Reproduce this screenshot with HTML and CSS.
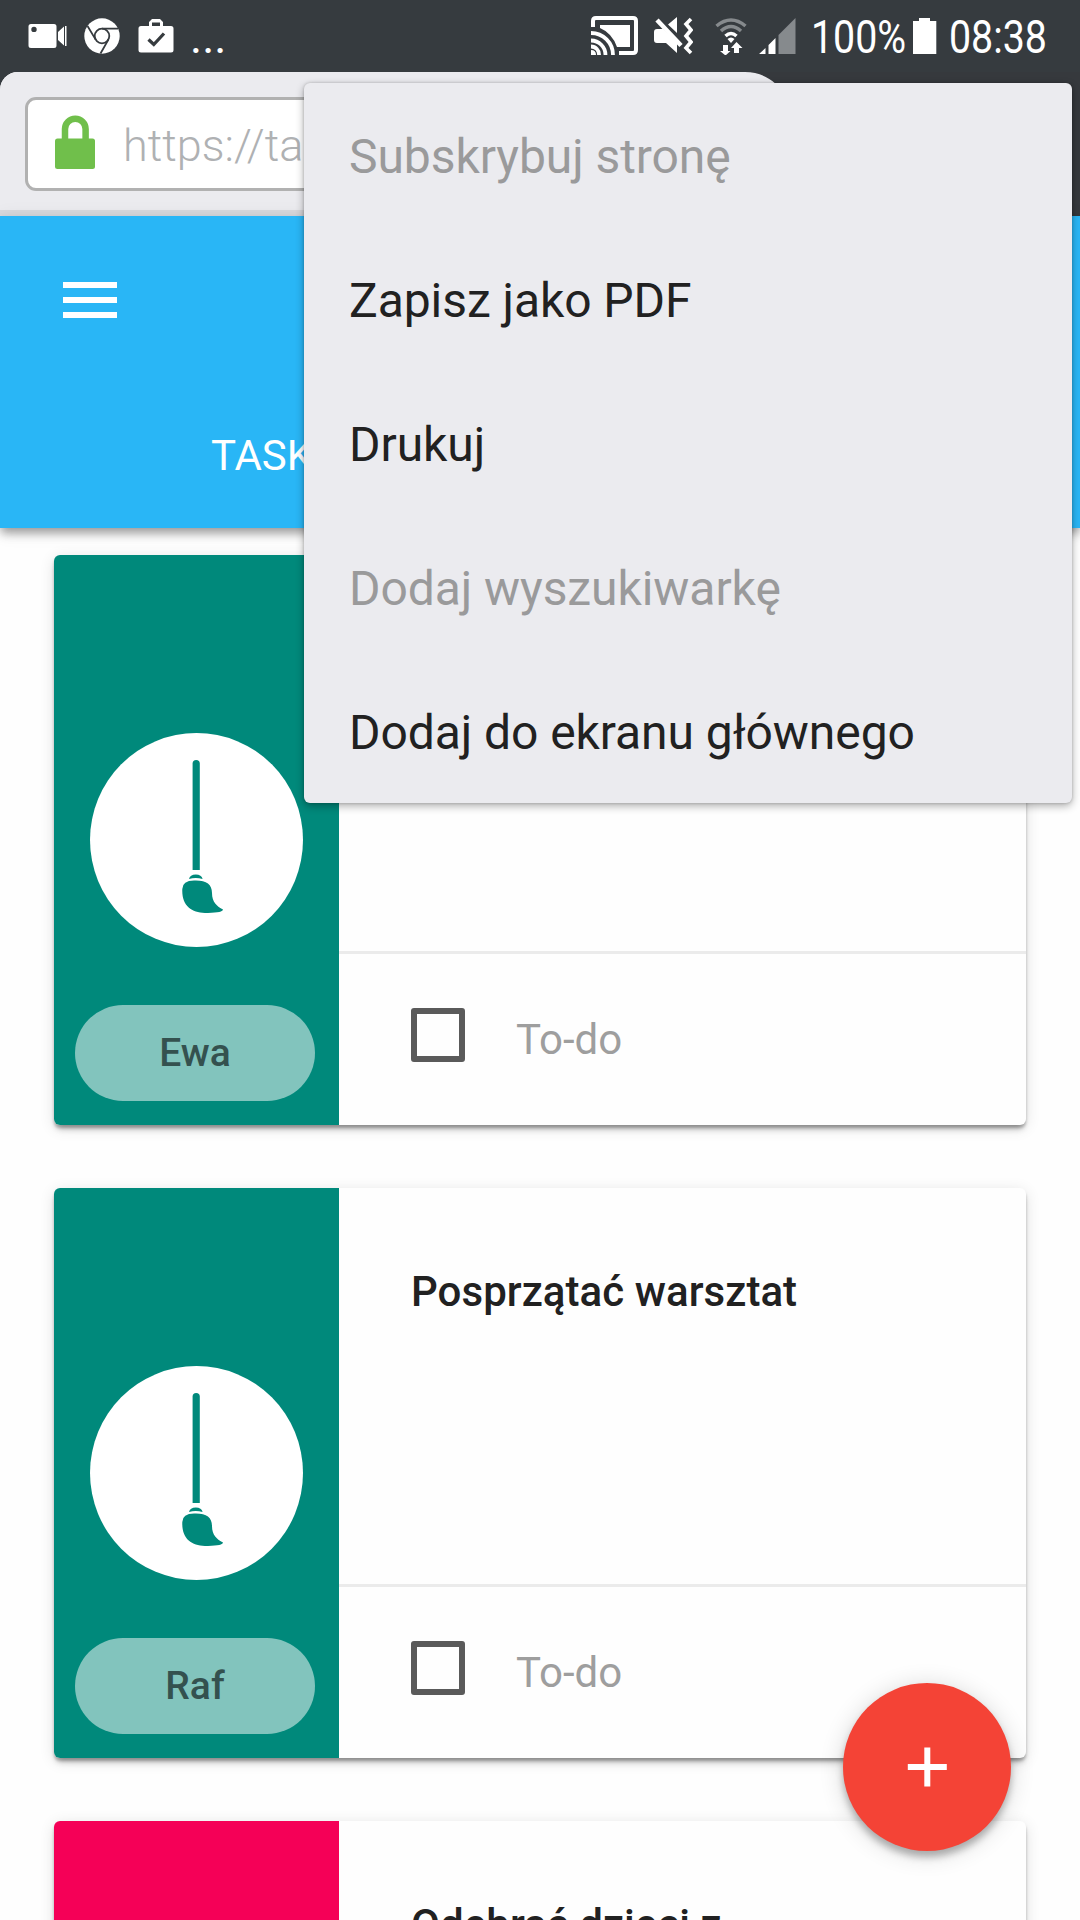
FILE: index.html
```html
<!DOCTYPE html>
<html lang="pl">
<head>
<meta charset="utf-8">
<title>Tasks</title>
<link rel="stylesheet" href="styles.css">
</head>
<body>
<div class="screen">
  <div class="status">
    <div class="status-group">
      <svg width="39" height="26" viewBox="0 0 39 26"><path fill="#fff" fill-rule="evenodd" d="M3 1H26a2.500 2.500 0 0 1 2.500 2.500V22.500a2.500 2.500 0 0 1-2.500 2.500H3A2.500 2.500 0 0 1 .5 22.500V3.500A2.500 2.500 0 0 1 3 1ZM6 3.700a2.700 2.700 0 1 0 0 5.400a2.700 2.700 0 0 0 0-5.400ZM30 9l6-5.500v19L30 17ZM37 3h1.500v20H37Z"/></svg>
      <svg class="chrome" width="36" height="36" viewBox="0 0 36 36"><circle cx="18" cy="18" r="17.700" fill="#fff"/><g fill="none" stroke="#363b3f" stroke-width="1.800"><circle cx="18" cy="18" r="7.300"/><path d="M18 10.700H34M11.700 21.600 3.500 8M24.400 21.600 16.500 35.500"/></g></svg>
      <svg class="shop" width="36" height="36" viewBox="0 0 36 36"><path fill="#fff" fill-rule="evenodd" d="M3 8H11V4l3-3H22l3 3V8h8a2.500 2.500 0 0 1 2.500 2.500V32A2.500 2.500 0 0 1 33 34.500H3A2.500 2.500 0 0 1 .5 32V10.500A2.500 2.500 0 0 1 3 8ZM14 4.500V8H22V4.500Z"/><path d="m10.500 21.500 5.300 5L26 15.500" fill="none" stroke="#363b3f" stroke-width="3.300"/></svg>
      <span class="more">...</span>
    </div>
    <div class="status-group">
      <svg width="47" height="40" viewBox="0 0 47 40"><g fill="none" stroke="#fff" stroke-width="4"><path d="M2 11V5q0-3 3-3H42q3 0 3 3V34q0 3-3 3H28"/><path d="M0 30.500a8 8 0 0 1 8 8.500M0 24.500a14.500 14.500 0 0 1 14.500 14.500M0 17a22 22 0 0 1 22 22" stroke-width="3.800"/></g><path fill="#fff" d="M9 9H39V31H26Q21 17 9 12ZM0 34q5 0 5 5H0Z"/></svg>
      <svg class="mute" width="39" height="38" viewBox="0 0 39 38"><path fill="#fff" d="M3 12H9L23 26V36L12 26H3Q0 26 0 23V15Q0 12 3 12ZM14 7.500 23 0V16Z"/><path d="m3 3 24 25.500" stroke="#fff" stroke-width="4.500"/><path d="m37 2-5 5 5 6-5 6 5 6-5 6 5 5" fill="none" stroke="#fff" stroke-width="3.600"/></svg>
      <svg class="wifi" width="32" height="37" viewBox="0 0 32 37"><g fill="none"><path d="M1.500 8Q16-4 30.500 8" stroke="#868a8d" stroke-width="3.500"/><path d="M6 13Q16 4 26 13" stroke="#868a8d" stroke-width="3.500"/><path d="M10.500 18Q16 13 21.500 18" stroke="#fff" stroke-width="3.500"/></g><path fill="#fff" d="m12.500 21q3.500-3 7 0L16 25ZM8 27h5v6h2.500L10.500 37.500 5 33h3ZM19 35h5V30h3.500L21.500 24 16 30h3Z"/></svg>
      <svg class="signal" width="37" height="37" viewBox="0 0 37 37"><path fill="#fff" d="M0 36 6.500 30V36ZM9.500 27 16.500 20V36H9.500Z"/><path fill="#868a8d" d="M19.500 17 36.500 0V36H19.500Z"/></svg>
      <span class="percent">100%</span>
      <svg class="battery" width="24" height="37" viewBox="0 0 24 37"><path fill="#fff" d="M6 0H17V3h6.300V36H0V3H6Z"/></svg>
      <span class="clock">08:38</span>
    </div>
  </div>

  <div class="browser">
    <svg class="curve" width="160" height="144" viewBox="0 0 160 144"><path fill="#36393d" d="M5 0H160V144H120C85 144 80 90 65 60C52 28 36 0 5 0Z"/></svg>
    <div class="url">
      <svg class="lock" width="40" height="54" viewBox="0 0 40 54"><path fill="none" stroke="#70bf4b" stroke-width="6.500" d="M10 26V14a10.300 10.300 0 0 1 20.600 0V26"/><rect y="23.500" width="40" height="30.500" rx="2.500" fill="#70bf4b"/></svg>
      <span>https://ta</span>
    </div>
  </div>

  <header class="appbar">
    <div class="burger"><i></i><i></i><i></i></div>
    <div class="tab">TASKS</div>
  </header>

  <main class="list">
    <article class="card">
      <div class="side">
        <div class="disc"><svg width="44" height="156" viewBox="0 0 44 156"><g fill="#00897b"><path d="M11.600 113V6.500a3.600 3.600 0 0 1 7.200 0V113Z"/><path d="M8 122q1-4.500 6.800-4.500T21.600 122q-7-2-13.600 0Z"/><path d="M1.300 132Q1.500 123.500 13 123.500C25 123 31 127 31 136C31 145 36 149.500 42 152.500Q42 155.500 27 156C12 156.500 .5 150 1.300 132Z"/></g></svg></div>
        <div class="pill">Ewa</div>
      </div>
      <div class="body">
        <div class="title"></div>
        <div class="todo"><i class="box"></i><span>To-do</span></div>
      </div>
    </article>
    <article class="card">
      <div class="side">
        <div class="disc"><svg width="44" height="156" viewBox="0 0 44 156"><g fill="#00897b"><path d="M11.600 113V6.500a3.600 3.600 0 0 1 7.200 0V113Z"/><path d="M8 122q1-4.500 6.800-4.500T21.600 122q-7-2-13.600 0Z"/><path d="M1.300 132Q1.500 123.500 13 123.500C25 123 31 127 31 136C31 145 36 149.500 42 152.500Q42 155.500 27 156C12 156.500 .5 150 1.300 132Z"/></g></svg></div>
        <div class="pill">Raf</div>
      </div>
      <div class="body">
        <div class="title">Posprzątać warsztat</div>
        <div class="todo"><i class="box"></i><span>To-do</span></div>
      </div>
    </article>
    <article class="card">
      <div class="side pink"></div>
      <div class="body">
        <div class="title">Odebrać dzieci z</div>
      </div>
    </article>
  </main>

  <button class="fab"><svg width="40" height="40" viewBox="0 0 40 40"><path d="M20.300 .5v39M.8 20h39" stroke="#fff" stroke-width="6"/></svg></button>

  <nav class="menu">
    <div class="item off">Subskrybuj stronę</div>
    <div class="item">Zapisz jako PDF</div>
    <div class="item">Drukuj</div>
    <div class="item off">Dodaj wyszukiwarkę</div>
    <div class="item">Dodaj do ekranu głównego</div>
  </nav>
</div>
</body>
</html>
```
FILE: styles.css
```css
* { box-sizing: border-box; }
body { margin: 0; font-family: Roboto, sans-serif; }
svg { display: block; flex: none; }

.screen {
  position: relative;
  display: flex;
  flex-direction: column;
  width: 1080px;
  height: 1920px;
  overflow: hidden;
  background: #fefefe;
}

.status {
  display: flex;
  flex: none;
  justify-content: space-between;
  height: 72px;
  padding: 0 32px 0 28px;
  background: #363b3f;
  color: #fff;
  font-size: 46px;
}
.status-group { display: flex; align-items: center; }
.chrome { margin-left: 17px; }
.shop { margin-left: 18px; }
.more { margin-left: 16px; padding-top: 2px; line-height: 74px; }
.mute { margin-left: 16px; }
.wifi { margin-left: 22px; }
.signal { margin-left: 12px; }
.percent, .clock {
  padding-top: 2px;
  line-height: 74px;
  transform: scaleX(.855);
  transform-origin: 0 50%;
  white-space: nowrap;
}
.percent { width: 94px; margin-left: 15px; }
.battery { margin-left: 8px; }
.clock { width: 99px; margin-left: 12px; }

.browser {
  position: relative;
  display: flex;
  flex: none;
  height: 144px;
  padding: 25px 0 0 25px;
  background: linear-gradient(#36393d, #36393d) right / 180px 100% no-repeat, linear-gradient(#ebebef 138px, #d9d9dd 138px);
  border-top-left-radius: 18px;
  box-shadow: -18px -18px 0 18px #363b3f;
  clip-path: inset(0);
}
.curve { position: absolute; left: 740px; top: 0; }
.url {
  display: flex;
  align-items: center;
  gap: 28px;
  width: 720px;
  height: 94px;
  padding-left: 27px;
  background: #fff;
  border: 3px solid #b1b1b1;
  border-radius: 11px;
  color: #afb1b3;
  font-size: 45px;
  font-weight: 300;
}
.lock { margin-bottom: 4px; }
.url span { padding-top: 2px; }

.appbar {
  position: relative;
  flex: none;
  height: 312px;
  padding: 66px 0 0 63px;
  background: #29b6f6;
  box-shadow: 0 6px 9px -1px rgba(0,0,0,.35), 0 3px 18px rgba(0,0,0,.1);
}
.burger { display: flex; flex-direction: column; gap: 9px; width: 54px; }
.burger i { height: 6px; background: #fff; }
.tab { margin: 113px 0 0 148px; color: #fff; font-size: 42px; line-height: 50px; }

.list { display: flex; flex-direction: column; gap: 63px; padding: 27px 54px 0; }
.card {
  display: flex;
  flex: none;
  height: 570px;
  border-radius: 6px;
  background: #fefefe;
  box-shadow: 0 6px 6px -3px rgba(0,0,0,.3), 0 3px 3px rgba(0,0,0,.2), 0 3px 15px rgba(0,0,0,.12);
}
.side {
  display: flex;
  flex-direction: column;
  width: 285px;
  padding: 178px 0 0 21px;
  background: #00897b;
  border-radius: 6px 0 0 6px;
}
.side.pink { background: #f50057; }
.disc {
  width: 213px;
  height: 214px;
  margin-left: 15px;
  padding: 24px 0 0 91px;
  border-radius: 50%;
  background: #fff;
}
.pill {
  width: 240px;
  height: 96px;
  margin-top: 58px;
  border-radius: 48px;
  background: #82c4bd;
  color: #34514f;
  font-size: 39px;
  font-weight: 500;
  line-height: 97px;
  text-align: center;
}
.body { display: flex; flex: 1; flex-direction: column; }
.title {
  height: 396px;
  padding: 77px 0 0 72px;
  color: #212121;
  font-size: 42px;
  font-weight: 500;
  line-height: 54px;
  letter-spacing: .05px;
}
.todo {
  display: flex;
  flex: 1;
  gap: 51px;
  padding: 54px 0 0 72px;
  border-top: 3px solid #ebebeb;
  color: #9e9e9e;
  font-size: 42px;
  line-height: 64px;
}
.box { width: 54px; height: 54px; border: 6px solid #5a5a5a; border-radius: 3px; }

.fab {
  position: absolute;
  left: 843px;
  top: 1683px;
  display: grid;
  place-items: center;
  width: 168px;
  height: 168px;
  padding: 0;
  border: 0;
  border-radius: 50%;
  background: #f44336;
  box-shadow: 0 6px 7px rgba(0,0,0,.26), 0 3px 24px rgba(0,0,0,.16);
}

.menu {
  position: absolute;
  left: 304px;
  top: 83px;
  width: 768px;
  border-radius: 6px;
  background: #ebebef;
  box-shadow: 0 3px 9px rgba(0,0,0,.32), 0 0 3px rgba(0,0,0,.2);
}
.item {
  height: 144px;
  padding: 2px 0 0 45px;
  color: #212121;
  font-size: 48px;
  line-height: 144px;
  letter-spacing: -.07px;
}
.item.off { color: #9a9a9b; }
```
